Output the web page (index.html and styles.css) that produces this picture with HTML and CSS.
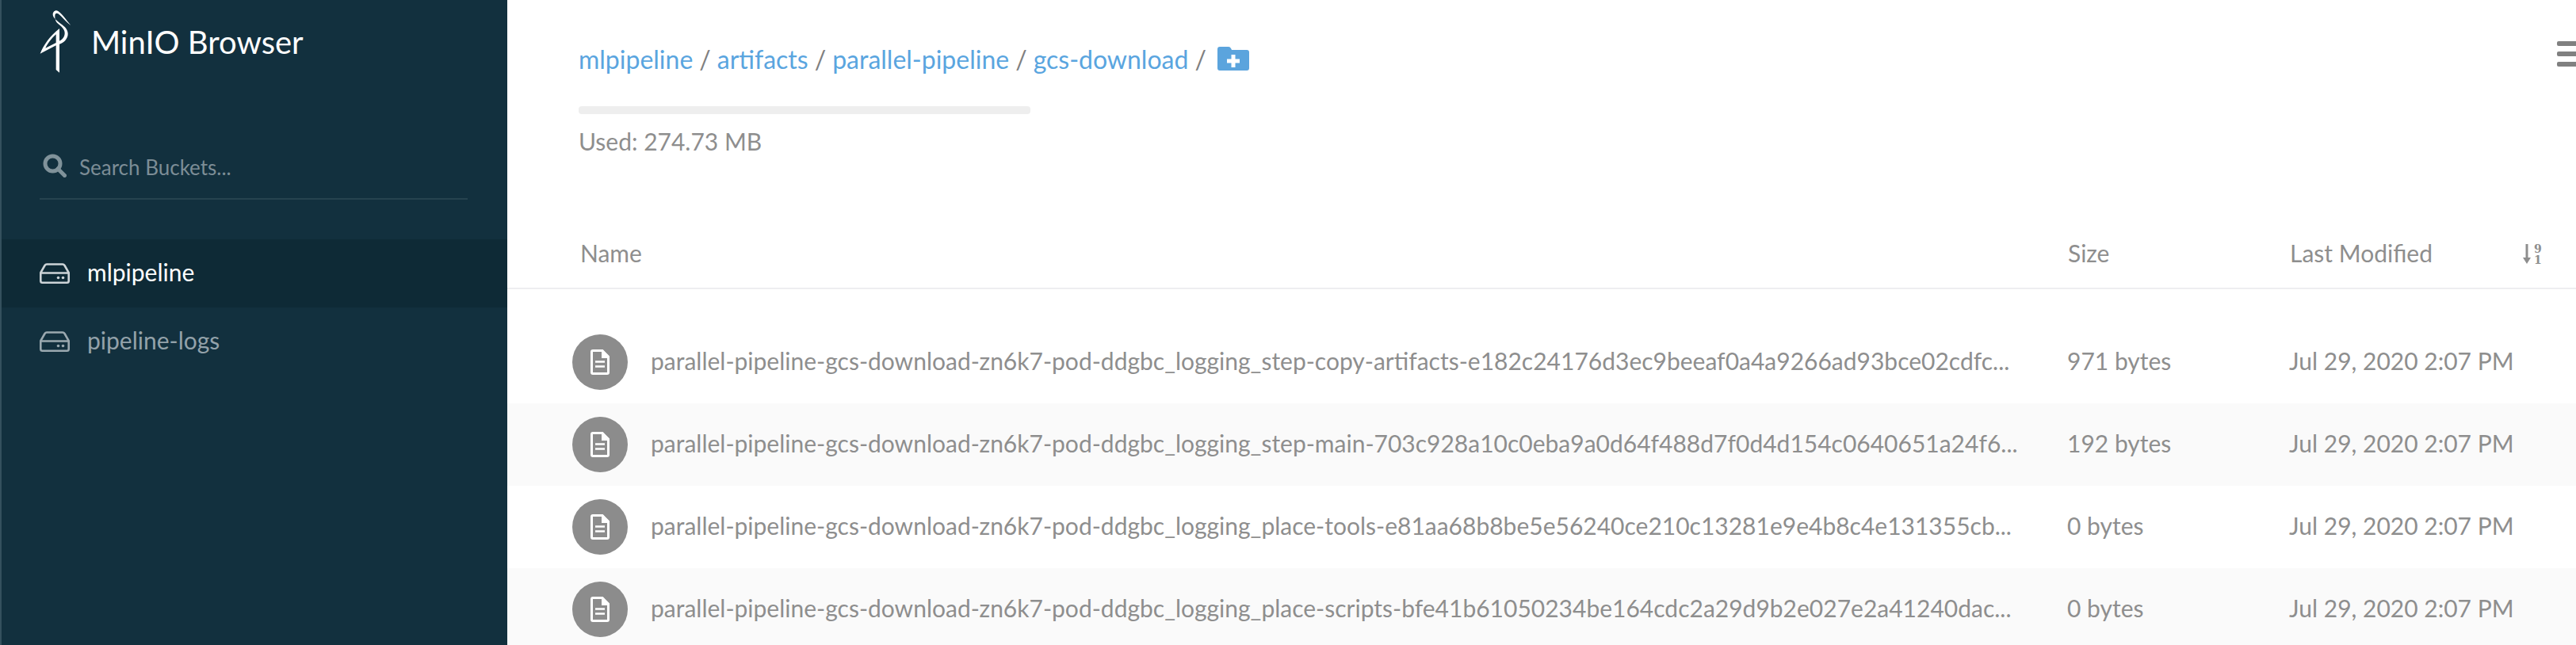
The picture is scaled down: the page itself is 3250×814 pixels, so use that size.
FILE: index.html
```html
<!DOCTYPE html>
<html lang="en">
<head>
  <meta charset="UTF-8" />
  <title>MinIO Browser</title>
  <link rel="stylesheet" href="styles.css">
</head>
<body>
  <aside class="sidebar">
    <div class="brand">
      <svg class="brand-logo" viewBox="90 36 120 240" aria-hidden="true">
        <path d="M208 96 C190 75 175 52 160 42 C150 36 140 44 140 55 C140 68 155 78 170 90 C185 100 197 112 197 128 C197 148 180 162 165 167 L165 155 C175 150 185 140 185 125 C185 110 172 100 160 90 C148 80 148 68 148 60 C148 50 155 48 160 52 C175 62 190 85 208 96 Z" fill="#fff"/>
        <path fill-rule="evenodd" d="M165 108 V275 L152 264 V172 L92 203 C105 170 130 135 165 108 Z M152 130 C135 145 120 165 112 182 L152 162 Z" fill="#fff"/>
      </svg>
      <span class="brand-name">MinIO Browser</span>
    </div>
    <div class="search">
      <svg class="search-icon" viewBox="0 0 30 30" aria-hidden="true">
        <circle cx="12.500" cy="12.500" r="9.500" fill="none" stroke="currentColor" stroke-width="5"/>
        <path d="M19 19 L27.500 27.500" stroke="currentColor" stroke-width="5" stroke-linecap="round"/>
      </svg>
      <span class="search-text">Search Buckets...</span>
    </div>
    <ul class="buckets">
      <li class="bucket active">
        <svg class="bucket-icon" viewBox="0 0 38 26" aria-hidden="true"><use href="#drive"/></svg>
        <span class="bucket-name">mlpipeline</span>
      </li>
      <li class="bucket">
        <svg class="bucket-icon" viewBox="0 0 38 26" aria-hidden="true"><use href="#drive"/></svg>
        <span class="bucket-name">pipeline-logs</span>
      </li>
    </ul>
  </aside>

  <main class="content">
    <header class="top">
      <div class="crumbs">
        <a>mlpipeline</a><span class="sep">/</span><a>artifacts</a><span class="sep">/</span><a>parallel-pipeline</a><span class="sep">/</span><a>gcs-download</a><span class="sep">/</span>
        <svg class="new-folder" viewBox="0 0 40 30" aria-hidden="true">
          <path d="M3 0 H14 Q16 0 17 2 L18 4 H37 Q40 4 40 7 V27 Q40 30 37 30 H3 Q0 30 0 27 V3 Q0 0 3 0 Z" fill="#5ba4dd"/>
          <path d="M20 10 V26 M12 18 H28" stroke="#fff" stroke-width="5"/>
        </svg>
      </div>
      <div class="usage-bar"></div>
      <div class="usage-text">Used: 274.73 MB</div>
      <div class="menu-btn"><i></i><i></i><i></i></div>
    </header>

    <div class="list-head">
      <div class="col-name">Name</div>
      <div class="col-size">Size</div>
      <div class="col-date">Last Modified</div>
      <svg class="sort-icon" viewBox="0 -4 28 34" aria-hidden="true">
        <path d="M5 0 V19" stroke="currentColor" stroke-width="3"/>
        <path d="M0 17 H10 L5 25 Z" fill="currentColor"/>
        <text class="sort-digit" x="14" y="11">9</text>
        <text class="sort-digit" x="14" y="25">1</text>
      </svg>
    </div>

    <div class="rows">
      <div class="row">
        <div class="file-icon"><svg viewBox="0 0 24 32" aria-hidden="true"><use href="#file"/></svg></div>
        <div class="file-name">parallel-pipeline-gcs-download-zn6k7-pod-ddgbc_logging_step-copy-artifacts-e182c24176d3ec9beeaf0a4a9266ad93bce02cdfc...</div>
        <div class="file-size">971 bytes</div>
        <div class="file-date">Jul 29, 2020 2:07 PM</div>
      </div>
      <div class="row">
        <div class="file-icon"><svg viewBox="0 0 24 32" aria-hidden="true"><use href="#file"/></svg></div>
        <div class="file-name">parallel-pipeline-gcs-download-zn6k7-pod-ddgbc_logging_step-main-703c928a10c0eba9a0d64f488d7f0d4d154c0640651a24f6...</div>
        <div class="file-size">192 bytes</div>
        <div class="file-date">Jul 29, 2020 2:07 PM</div>
      </div>
      <div class="row">
        <div class="file-icon"><svg viewBox="0 0 24 32" aria-hidden="true"><use href="#file"/></svg></div>
        <div class="file-name">parallel-pipeline-gcs-download-zn6k7-pod-ddgbc_logging_place-tools-e81aa68b8be5e56240ce210c13281e9e4b8c4e131355cb...</div>
        <div class="file-size">0 bytes</div>
        <div class="file-date">Jul 29, 2020 2:07 PM</div>
      </div>
      <div class="row">
        <div class="file-icon"><svg viewBox="0 0 24 32" aria-hidden="true"><use href="#file"/></svg></div>
        <div class="file-name">parallel-pipeline-gcs-download-zn6k7-pod-ddgbc_logging_place-scripts-bfe41b61050234be164cdc2a29d9b2e027e2a41240dac...</div>
        <div class="file-size">0 bytes</div>
        <div class="file-date">Jul 29, 2020 2:07 PM</div>
      </div>
    </div>
  </main>

  <svg class="defs" aria-hidden="true">
    <symbol id="drive" viewBox="0 0 38 26">
      <path d="M9 1.500 H29 Q30.500 1.500 31.500 3 L36.700 12 V22.500 Q36.700 24.700 34.500 24.700 H3.500 Q1.300 24.700 1.300 22.500 V12 L6.500 3 Q7.500 1.500 9 1.500 Z M2 12.500 H36" fill="none" stroke="currentColor" stroke-width="2.600"/>
      <circle cx="23.500" cy="18.500" r="1.800" fill="currentColor"/>
      <circle cx="29.500" cy="18.500" r="1.800" fill="currentColor"/>
    </symbol>
    <symbol id="file" viewBox="0 0 24 32">
      <path d="M3 1.500 H15 L22.500 9 V29 Q22.500 30.500 21 30.500 H3 Q1.500 30.500 1.500 29 V3 Q1.500 1.500 3 1.500 Z" fill="none" stroke="#fff" stroke-width="3"/>
      <path d="M14 1 H16 L23 8 V11 H14 Z" fill="#fff"/>
      <path d="M6 15.500 H18 M6 21.500 H18" stroke="#fff" stroke-width="2.600"/>
    </symbol>
  </svg>
</body>
</html>
```

FILE: styles.css
```css
html, body {
  height: 100%;
}
body {
  margin: 0;
  display: flex;
  height: 814px;
  overflow: hidden;
  font-family: Lato, sans-serif;
  background: #fff;
  color: #8e8e8e;
}
.defs {
  width: 0;
  height: 0;
  position: absolute;
}

/* sidebar */
.sidebar {
  width: 640px;
  flex-shrink: 0;
  background: #12303e;
  border-left: 2px solid #34505d;
  box-sizing: border-box;
}
.brand {
  display: flex;
  align-items: flex-start;
  padding: 12px 0 0 48px;
  height: 181px;
  box-sizing: border-box;
}
.brand-logo {
  width: 40px;
  height: 80px;
  flex-shrink: 0;
}
.brand-name {
  margin: 16px 0 0 25px;
  font-size: 40px;
  line-height: 50px;
  color: #fff;
}
.search {
  display: flex;
  align-items: center;
  height: 56px;
  margin: 0 50px 0 48px;
  padding: 0 0 13px 4px;
  border-bottom: 2px solid #26434f;
  color: #7c8d96;
}
.search-icon {
  width: 30px;
  height: 30px;
  color: #80929a;
}
.search-text {
  margin-left: 16px;
  padding-top: 4px;
  font-size: 26px;
}
.buckets {
  list-style: none;
  margin: 50px 0 0;
  padding: 0;
}
.bucket {
  display: flex;
  align-items: center;
  height: 86px;
  padding-left: 48px;
  font-size: 30px;
  color: #93a2aa;
}
.bucket.active {
  background: #0e2a36;
  color: #fff;
}
.bucket-icon {
  width: 38px;
  height: 26px;
  margin-right: 22px;
  color: #9aa8af;
}
.bucket.active .bucket-icon {
  color: #ccd3d7;
}
.bucket-name {
  padding-bottom: 4px;
}

/* main */
.content {
  flex: 1;
  min-width: 0;
}
.top {
  position: relative;
  height: 296px;
  padding: 50px 0 0 90px;
  box-sizing: border-box;
}
.crumbs {
  display: flex;
  align-items: center;
  height: 48px;
  font-size: 32px;
}
.crumbs a {
  color: #5aa5df;
}
.sep {
  margin: 0 8px;
  color: #808080;
}
.new-folder {
  width: 40px;
  height: 30px;
  margin-left: 6px;
}
.usage-bar {
  width: 570px;
  height: 10px;
  margin-top: 36px;
  background: #eee;
  border-radius: 4px;
}
.usage-text {
  margin-top: 14px;
  font-size: 30px;
  line-height: 40px;
}
.menu-btn {
  position: absolute;
  top: 52px;
  right: 0;
  display: flex;
  flex-direction: column;
  gap: 7px;
}
.menu-btn i {
  display: block;
  width: 24px;
  height: 6px;
  background: #808080;
  border-radius: 2px 0 0 2px;
}
.list-head {
  display: flex;
  align-items: center;
  height: 49px;
  padding: 0 0 18px 92px;
  border-bottom: 2px solid #eeeef0;
  font-size: 30px;
}
.col-name {
  width: 1877px;
  padding-bottom: 3px;
}
.col-size {
  width: 280px;
  padding-bottom: 3px;
}
.col-date {
  width: 294px;
  padding-bottom: 3px;
}
.sort-icon {
  width: 28px;
  height: 34px;
  color: #8e8e8e;
}
.sort-digit {
  font-family: "DejaVu Serif", serif;
  font-size: 14px;
  font-weight: 700;
  fill: currentColor;
}
.rows {
  padding-top: 40px;
}
.row {
  display: flex;
  align-items: center;
  height: 104px;
  padding-left: 82px;
  font-size: 30px;
}
.row:nth-child(even) {
  background: #fafafa;
}
.file-icon {
  width: 70px;
  height: 70px;
  flex-shrink: 0;
  border-radius: 50%;
  background: #8c8c8c;
  display: flex;
  align-items: center;
  justify-content: center;
}
.file-icon svg {
  width: 24px;
  height: 32px;
}
.file-name {
  width: 1787px;
  margin-left: 29px;
  padding-bottom: 4px;
  white-space: nowrap;
}
.file-size {
  width: 280px;
  padding-bottom: 4px;
}
.file-date {
  padding-bottom: 4px;
  white-space: nowrap;
}
```
